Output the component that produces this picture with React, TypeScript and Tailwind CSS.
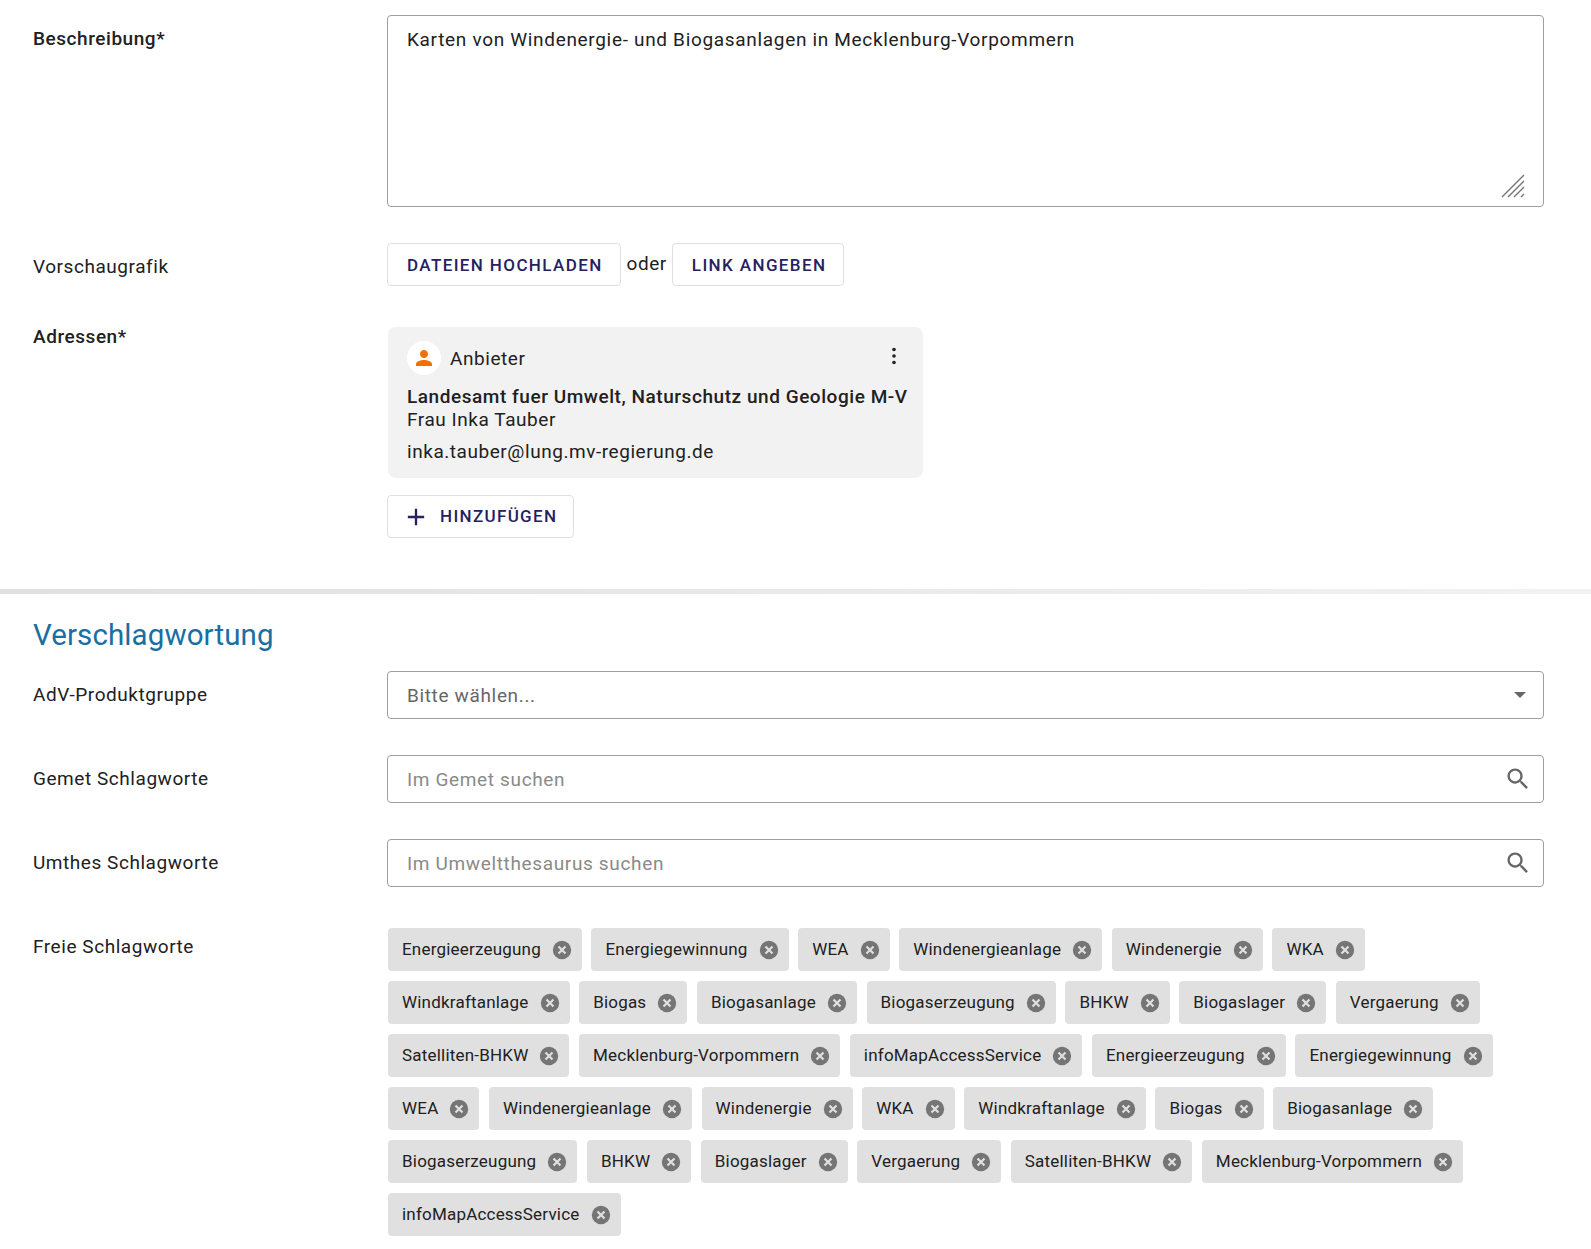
const keywords = [
  "Energieerzeugung",
  "Energiegewinnung",
  "WEA",
  "Windenergieanlage",
  "Windenergie",
  "WKA",
  "Windkraftanlage",
  "Biogas",
  "Biogasanlage",
  "Biogaserzeugung",
  "BHKW",
  "Biogaslager",
  "Vergaerung",
  "Satelliten-BHKW",
  "Mecklenburg-Vorpommern",
  "infoMapAccessService",
];

function Chip({ label }: { label: string }) {
  return (
    <div className="flex h-[43px] items-center rounded-[4px] bg-[#e0e0e0] pl-[14px] pr-[9px] text-[17px] tracking-[0.2px] text-[#212121]">
      <span>{label}</span>
      <svg className="ml-[10px] h-[22px] w-[22px]" viewBox="0 0 24 24">
        <circle cx="12" cy="12" r="10" fill="#757575" />
        <path d="M8.2 8.2l7.6 7.6M15.8 8.2l-7.6 7.6" stroke="#e0e0e0" strokeWidth="2.4" />
      </svg>
    </div>
  );
}

function OutlineButton({ children }: { children: React.ReactNode }) {
  return (
    <button className="flex h-[43px] items-center rounded-[4px] border border-[#e0e0e0] bg-white pl-[19px] pr-[17px] pt-[2px] text-[17px] font-medium tracking-[1.38px] text-[#25215f]">
      {children}
    </button>
  );
}

function SearchField({ placeholder }: { placeholder: string }) {
  return (
    <div className="flex h-[48px] items-center justify-between rounded-[4px] border border-[#9e9e9e] pl-[19px] pr-[11px]">
      <span className="pt-[2px] text-[19px] tracking-[0.65px] text-[#8a8a8a]">{placeholder}</span>
      <svg className="h-[28px] w-[28px] text-[#666666]" viewBox="0 0 24 24" fill="currentColor">
        <path d="M15.5 14h-.79l-.28-.27C15.41 12.59 16 11.11 16 9.5 16 5.91 13.09 3 9.5 3S3 5.91 3 9.5 5.91 16 9.5 16c1.61 0 3.09-.59 4.23-1.57l.27.28v.79l5 4.99L20.49 19l-4.99-5zm-6 0C7.01 14 5 11.99 5 9.5S7.01 5 9.5 5 14 7.01 14 9.5 11.99 14 9.5 14z" />
      </svg>
    </div>
  );
}

export default function App() {
  return (
    <div
      className="min-h-[1249px] bg-white text-[#212121]"
      style={{ fontFamily: "Roboto, sans-serif" }}
    >
      <div className="px-[33px] pt-[15px] pr-[47px]">
        {/* Beschreibung */}
        <div className="flex">
          <div className="w-[354px] shrink-0 pt-[10px] text-[19px] font-medium tracking-[0.55px]">Beschreibung*</div>
          <div className="relative h-[192px] flex-1 rounded-[4px] border border-[#9e9e9e] pl-[19px] pt-[10px] text-[19px] tracking-[0.68px]">
            Karten von Windenergie- und Biogasanlagen in Mecklenburg-Vorpommern
            <svg className="absolute bottom-[8px] right-[18px] h-[24px] w-[24px]" viewBox="0 0 24 24" stroke="#757575" strokeWidth="1.4" fill="none">
              <path d="M1 23 23 1M7 23 23 7M13 23l10-10M20 23l3-3" />
            </svg>
          </div>
        </div>

        {/* Vorschaugrafik */}
        <div className="mt-[36px] flex">
          <div className="w-[354px] shrink-0 pt-[10px] text-[19px] tracking-[0.55px]">Vorschaugrafik</div>
          <div className="flex items-start">
            <OutlineButton>DATEIEN HOCHLADEN</OutlineButton>
            <span className="ml-[6px] mr-[5px] pt-[7px] text-[19px] tracking-[0.55px]">oder</span>
            <OutlineButton>LINK ANGEBEN</OutlineButton>
          </div>
        </div>

        {/* Adressen */}
        <div className="mt-[40px] flex">
          <div className="w-[354px] shrink-0 text-[19px] font-medium leading-[22px] tracking-[0.55px]">Adressen*</div>
          <div>
            <div className="ml-[1px] mt-[1px] h-[151px] w-[535px] rounded-[8px] bg-[#f2f2f2] pl-[19px] pr-[14px] pt-[14px] text-[19px] tracking-[0.55px]">
              <div className="flex items-center justify-between">
                <div className="flex items-center">
                  <div className="flex h-[34px] w-[34px] items-center justify-center rounded-full bg-white">
                    <svg className="h-[24px] w-[24px] text-[#f07000]" viewBox="0 0 24 24" fill="currentColor">
                      <path d="M12 12c2.21 0 4-1.79 4-4s-1.79-4-4-4-4 1.79-4 4 1.79 4 4 4zm0 2c-2.67 0-8 1.34-8 4v2h16v-2c0-2.66-5.33-4-8-4z" />
                    </svg>
                  </div>
                  <span className="ml-[9px] pt-[3px]">Anbieter</span>
                </div>
                <svg className="mb-[4px] mr-[3px] h-[24px] w-[24px] text-[#212121]" viewBox="0 0 24 24" fill="currentColor">
                  <circle cx="12" cy="5.5" r="1.8" />
                  <circle cx="12" cy="12" r="1.8" />
                  <circle cx="12" cy="18.5" r="1.8" />
                </svg>
              </div>
              <div className="mt-[10px] whitespace-nowrap font-medium leading-[24px]">Landesamt fuer Umwelt, Naturschutz und Geologie M-V</div>
              <div className="leading-[22px]">Frau Inka Tauber</div>
              <div className="mt-[10px] leading-[22px]">inka.tauber@lung.mv-regierung.de</div>
            </div>
            <div className="mt-[17px] flex">
              <button className="flex h-[43px] items-center rounded-[4px] border border-[#e0e0e0] bg-white pl-[14px] pr-[16px] text-[17px] font-medium tracking-[1.33px] text-[#25215f]">
                <svg className="mr-[10px] h-[28px] w-[28px]" viewBox="0 0 24 24" fill="currentColor">
                  <path d="M19 13h-6v6h-2v-6H5v-2h6V5h2v6h6v2z" />
                </svg>
                <span className="pt-[1px]">HINZUFÜGEN</span>
              </button>
            </div>
          </div>
        </div>
      </div>

      {/* Trenner */}
      <div className="mt-[51px] h-[5px] bg-gradient-to-r from-[#e0e0e0] to-[#f2f2f2]" />

      <div className="px-[33px] pr-[47px]">
        <h2 className="mt-[23px] text-[29.5px] leading-[36px] tracking-[0.1px] text-[#196ea2]">Verschlagwortung</h2>

        <div className="mt-[18px] flex">
          <div className="w-[354px] shrink-0 pt-[10px] text-[19px] tracking-[0.55px]">AdV-Produktgruppe</div>
          <div className="flex h-[48px] flex-1 items-center justify-between rounded-[4px] border border-[#9e9e9e] pl-[19px] pr-[17px]">
            <span className="pt-[2px] text-[19px] tracking-[0.65px] text-[#666666]">Bitte wählen...</span>
            <div className="h-0 w-0 border-x-[6px] border-t-[6px] border-x-transparent border-t-[#666666]" />
          </div>
        </div>

        <div className="mt-[36px] flex">
          <div className="w-[354px] shrink-0 pt-[10px] text-[19px] tracking-[0.55px]">Gemet Schlagworte</div>
          <div className="flex-1">
            <SearchField placeholder="Im Gemet suchen" />
          </div>
        </div>

        <div className="mt-[36px] flex">
          <div className="w-[354px] shrink-0 pt-[10px] text-[19px] tracking-[0.55px]">Umthes Schlagworte</div>
          <div className="flex-1">
            <SearchField placeholder="Im Umweltthesaurus suchen" />
          </div>
        </div>

        <div className="mt-[41px] flex">
          <div className="w-[355px] shrink-0 pt-[5px] text-[19px] tracking-[0.55px]">Freie Schlagworte</div>
          <div className="flex flex-1 flex-wrap gap-x-[9.6px] gap-y-[10px]">
            {[...keywords, ...keywords].map((k, i) => (
              <Chip key={i} label={k} />
            ))}
          </div>
        </div>
      </div>
    </div>
  );
}
